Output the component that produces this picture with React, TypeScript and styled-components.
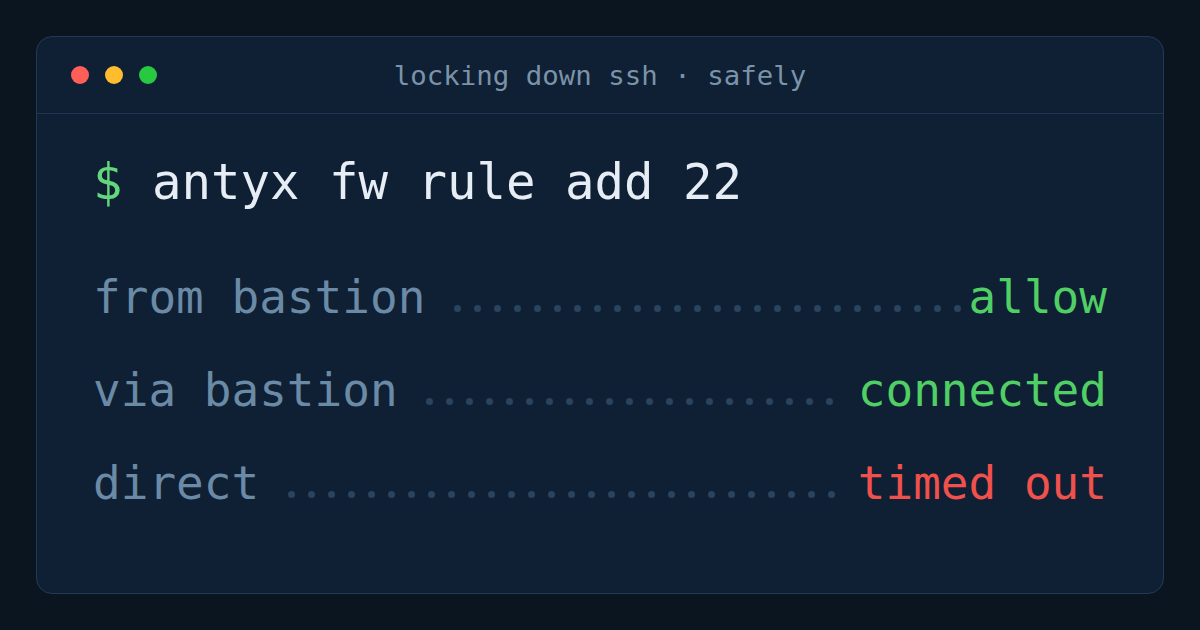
import React from "react";
import styled, { createGlobalStyle } from "styled-components";

const Global = createGlobalStyle`
  html, body { margin: 0; padding: 0; background: #0a1520; }
  * { box-sizing: border-box; }
`;

const Page = styled.div`
  width: 1200px;
  height: 630px;
  padding: 36px;
  background: #0a1520;
  font-family: "DejaVu Sans Mono", monospace;
`;

const Card = styled.div`
  height: 100%;
  display: flex;
  flex-direction: column;
  background: #0f1f34;
  border: 1px solid #213b57;
  border-radius: 16px;
  overflow: hidden;
`;

const Header = styled.div`
  height: 77px;
  display: grid;
  grid-template-columns: 1fr auto 1fr;
  align-items: center;
  padding: 0 34px;
  border-bottom: 1px solid #1e3652;
`;

const Lights = styled.div`
  display: flex;
  gap: 16px;
`;

const Light = styled.span<{ $c: string }>`
  width: 18px;
  height: 18px;
  border-radius: 50%;
  background: ${(p) => p.$c};
`;

const Title = styled.div`
  font-size: 27.4px;
  color: #7b93a9;
  white-space: pre;
`;

const Body = styled.div`
  padding: 39px 56px 0;
  display: flex;
  flex-direction: column;
`;

const Command = styled.div`
  font-size: 49px;
  line-height: 60px;
  color: #e6edf5;
  white-space: pre;
  margin-bottom: 54px;
`;

const Prompt = styled.span`
  color: #62d77c;
`;

const Rows = styled.div`
  display: flex;
  flex-direction: column;
  gap: 33px;
`;

const Row = styled.div`
  display: flex;
  align-items: flex-start;
  font-size: 46px;
  line-height: 60px;
`;

const Label = styled.span`
  color: #6a8aa6;
  white-space: pre;
`;

const Leader = styled.span`
  flex: 1;
  min-width: 0;
  height: 8px;
  margin: 37px 0 0 22px;
  display: flex;
  flex-wrap: wrap;
  overflow: hidden;
`;

const Dot = styled.span`
  flex: 0 0 20px;
  height: 8px;
  display: flex;
  justify-content: center;
  align-items: center;

  &::after {
    content: "";
    width: 7px;
    height: 7px;
    border-radius: 50%;
    background: #28445f;
  }
`;

const Value = styled.span<{ $c: string }>`
  color: ${(p) => p.$c};
  white-space: pre;
`;

const rows = [
  { label: "from bastion", value: "allow", color: "#4fcf64" },
  { label: "via bastion", value: "connected", color: "#4fcf64" },
  { label: "direct", value: "timed out", color: "#f0514c" },
];

const dots = Array.from({ length: 60 }, (_, i) => i);

export default function App() {
  return (
    <>
      <Global />
      <Page>
        <Card>
          <Header>
            <Lights>
              <Light $c="#ff5f57" />
              <Light $c="#febc2e" />
              <Light $c="#28c840" />
            </Lights>
            <Title>locking down ssh · safely</Title>
            <div />
          </Header>
          <Body>
            <Command>
              <Prompt>$</Prompt> antyx fw rule add 22
            </Command>
            <Rows>
              {rows.map((r) => (
                <Row key={r.label}>
                  <Label>{r.label}</Label>
                  <Leader>
                    {dots.map((d) => (
                      <Dot key={d} />
                    ))}
                  </Leader>
                  <Value $c={r.color}>{r.value}</Value>
                </Row>
              ))}
            </Rows>
          </Body>
        </Card>
      </Page>
    </>
  );
}
